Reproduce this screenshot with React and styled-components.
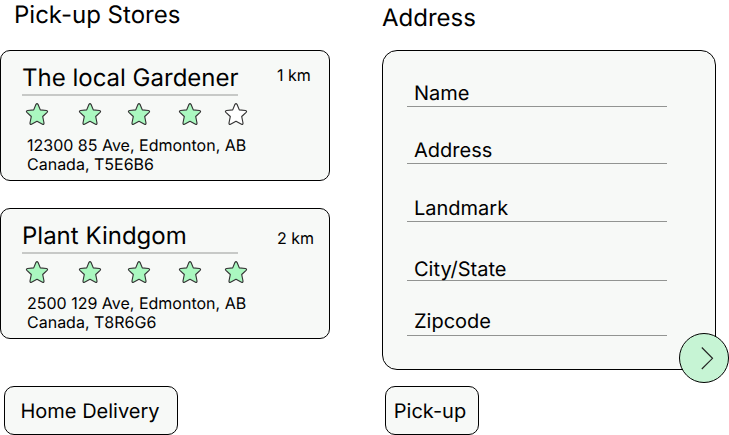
import React from 'react';
import styled, { createGlobalStyle } from 'styled-components';

const GlobalStyle = createGlobalStyle`
  * { box-sizing: border-box; }
  body {
    margin: 0;
    background: #fff;
    color: #000;
    font-family: Inter, "Liberation Sans", sans-serif;
    text-rendering: geometricPrecision;
    overflow: hidden;
  }
  h1, h2, p { margin: 0; font-weight: 400; }
  button { font: inherit; color: inherit; padding: 0; text-rendering: inherit; }
`;

const Page = styled.main`
  display: grid;
  grid-template-columns: 382px 347px;
  width: 729px;
  height: 435px;
`;

const Column = styled.section`
  display: flex;
  flex-direction: column;
  align-items: flex-start;
`;

const Heading = styled.h1`
  height: 50px;
  padding: ${(p) => p.$top}px 0 0 ${(p) => p.$left}px;
  font-size: 24px;
  line-height: 29px;
  white-space: nowrap;
`;

const StoreList = styled.div`
  display: grid;
  gap: 27px;
`;

const StoreCard = styled.article`
  width: 330px;
  height: 131px;
  padding: 12px 0 0 21px;
  border: 1px solid #000;
  border-radius: 10px;
  background: #f7f9f7;
`;

const StoreHeader = styled.div`
  display: flex;
`;

const StoreName = styled.h2`
  width: 216px;
  height: 33px;
  border-bottom: 2px solid #c7c9c7;
  font-size: 24px;
  line-height: 29px;
  white-space: nowrap;
`;

const Distance = styled.span`
  margin: ${(p) => p.$top}px 0 0 39px;
  font-size: 16px;
  line-height: 19px;
  white-space: nowrap;
`;

const Rating = styled.div`
  display: grid;
  grid-template-columns: 53px 49px 51px 46px 24px;
  margin: 6px 0 0 3px;
  height: 24px;
`;

const StarIcon = styled.svg`
  display: block;
  width: 24px;
  height: 24px;
  fill: ${(p) => (p.$filled ? '#aaf8c0' : '#fff')};
  stroke: #333;
  stroke-width: 1.15;
  stroke-linejoin: round;
`;

const StoreAddress = styled.p`
  padding: 10px 0 0 5px;
  font-size: 16px;
  line-height: 19px;
  white-space: pre-line;
`;

const ActionButton = styled.button`
  width: ${(p) => p.$width}px;
  height: 49px;
  margin: ${(p) => p.$gap}px 0 0 ${(p) => p.$left}px;
  padding-right: ${(p) => p.$inset || 0}px;
  border: 1px solid #000;
  border-radius: 10px;
  background: #f7f9f7;
  font-size: 20px;
  line-height: 24px;
  white-space: nowrap;
`;

const FormPanel = styled.form`
  position: relative;
  width: 334px;
  height: 320px;
  padding: 0 0 0 24px;
  border: 1px solid #000;
  border-radius: 15px;
  background: #f7f9f7;
`;

const Field = styled.label`
  display: flex;
  align-items: flex-end;
  width: 260px;
  height: ${(p) => p.$height}px;
  padding: 0 0 0 7px;
  border-bottom: 1px solid #929492;
  font-size: 20px;
  line-height: 24px;
`;

const FieldName = styled.span`
  margin-bottom: ${(p) => p.$drop}px;
`;

const NextButton = styled.button`
  position: absolute;
  right: -14px;
  bottom: -14px;
  width: 50px;
  height: 50px;
  border: 1px solid #000;
  border-radius: 50%;
  background: #c6f4d4;
`;

const Chevron = styled.svg`
  display: block;
  width: 48px;
  height: 48px;
  fill: none;
  stroke: #222;
  stroke-width: 1.15;
`;

const stores = [
  { name: 'The local Gardener', distance: '1 km', distanceTop: 3, stars: 4, address: '12300 85 Ave, Edmonton, AB\nCanada, T5E6B6' },
  { name: 'Plant Kindgom', distance: '2 km', distanceTop: 8, stars: 5, address: '2500 129 Ave, Edmonton, AB\nCanada, T8R6G6' },
];

const fields = [
  { label: 'Name', height: 56, drop: 1 },
  { label: 'Address', height: 57, drop: 1 },
  { label: 'Landmark', height: 58, drop: 1 },
  { label: 'City/State', height: 59, drop: -1 },
  { label: 'Zipcode', height: 55, drop: 2 },
];

function Star({ filled }) {
  return (
    <StarIcon $filled={filled} viewBox="0 0 24 24">
      <path d="M11 2.3Q12 .9 13 2.3L15.3 7.9L21.5 8.5Q23.3 8.9 22.1 10.3L17.7 14.5L19 21Q19.1 22.9 17.5 22.2L12 19.3L6.5 22.2Q4.9 22.9 5 21L6.3 14.5L1.9 10.3Q.7 8.9 2.5 8.5L8.7 7.9Z" />
    </StarIcon>
  );
}

function Store({ store }) {
  return (
    <StoreCard>
      <StoreHeader>
        <StoreName>{store.name}</StoreName>
        <Distance $top={store.distanceTop}>{store.distance}</Distance>
      </StoreHeader>
      <Rating>
        {[0, 1, 2, 3, 4].map((i) => <Star key={i} filled={i < store.stars} />)}
      </Rating>
      <StoreAddress>{store.address}</StoreAddress>
    </StoreCard>
  );
}

export default function App() {
  return (
    <>
      <GlobalStyle />
      <Page>
        <Column>
          <Heading $top={0} $left={14}>Pick-up Stores</Heading>
          <StoreList>
            {stores.map((store) => <Store key={store.name} store={store} />)}
          </StoreList>
          <ActionButton $width={174} $gap={47} $left={4} $inset={2}>Home Delivery</ActionButton>
        </Column>
        <Column>
          <Heading $top={3} $left={0}>Address</Heading>
          <FormPanel>
            {fields.map((f) => (
              <Field key={f.label} $height={f.height}>
                <FieldName $drop={f.drop}>{f.label}</FieldName>
              </Field>
            ))}
            <NextButton type="button" aria-label="Next">
              <Chevron viewBox="0 0 48 48"><path d="M21.8 13.5L32.5 24.3L21.8 35" /></Chevron>
            </NextButton>
          </FormPanel>
          <ActionButton $width={94} $gap={16} $left={3} $inset={4}>Pick-up</ActionButton>
        </Column>
      </Page>
    </>
  );
}
